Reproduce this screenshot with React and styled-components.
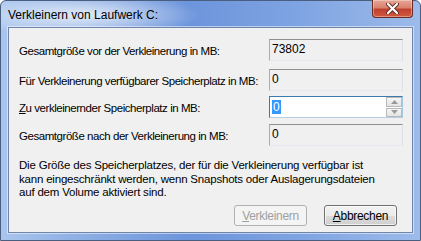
import React from "react";
import styled, { createGlobalStyle } from "styled-components";

const Global = createGlobalStyle`
  html, body { margin: 0; padding: 0; background: #ffffff; }
  body { font-family: "Liberation Sans", Arial, sans-serif; }
`;

const Window = styled.div`
  width: 421px;
  height: 241px;
  box-sizing: border-box;
  display: flex;
  flex-direction: column;
  border: 1px solid #4a5f80;
  border-radius: 6px 6px 0 0;
  padding: 0 7px 7px 7px;
  background:
    radial-gradient(ellipse 120px 22px at 80px 14px, rgba(255,255,255,0.75), rgba(255,255,255,0) 100%),
    linear-gradient(to right, #a9c5ee 0%, #8fb0e4 18%, #6d95dc 45%, #7ea3e2 70%, #9dbbea 100%);
`;

const TitleBar = styled.div`
  height: 26px;
  display: flex;
  align-items: center;
  justify-content: space-between;
  flex-shrink: 0;
`;

const Title = styled.div`
  font-size: 12px;
  color: #000;
  padding-top: 2px;
`;

const CloseButton = styled.div`
  align-self: flex-start;
  margin-top: -1px;
  width: 41px;
  height: 18px;
  box-sizing: border-box;
  border: 1px solid #6b2a24;
  border-top: none;
  border-radius: 0 0 4px 4px;
  background: linear-gradient(to bottom, #e8a593 0%, #d8826f 45%, #c0402e 55%, #d05a3e 100%);
  display: flex;
  align-items: center;
  justify-content: center;
  box-shadow: inset 0 0 0 1px rgba(255,255,255,0.35);
`;

const Client = styled.div`
  flex: 1;
  box-sizing: border-box;
  background: #f0f0f0;
  border: 1px solid #6f86a8;
  box-shadow: 0 0 0 1px rgba(255,255,255,0.5);
  padding: 11px 9px 6px 10px;
  display: flex;
  flex-direction: column;
  font-size: 11.5px;
  color: #000;
`;

const FieldRow = styled.div`
  display: grid;
  grid-template-columns: 250px 134px;
  align-items: center;
  margin-top: ${(p) => p.$top}px;
`;

const Label = styled.div`
  white-space: nowrap;
  letter-spacing: -0.45px;
  padding-top: 2px;
`;

const Field = styled.div`
  height: 22px;
  box-sizing: border-box;
  border: 1px solid #abadb3;
  border-top-color: #8e8f8f;
  border-right-color: #dbdfe6;
  border-bottom-color: #e3e9ef;
  background: #f0f0f0;
  display: flex;
  align-items: flex-start;
  padding: 2px 2px;
  line-height: 14px;
  font-size: 12px;
`;

const SpinField = styled.div`
  height: 22px;
  box-sizing: border-box;
  border: 1px solid #3d7bad;
  border-bottom-color: #b5cfe7;
  border-right-color: #a4c9e3;
  background: #ffffff;
  display: flex;
  align-items: stretch;
  font-size: 12px;
`;

const SpinInput = styled.div`
  flex: 1;
  padding: 3px 2px;
  line-height: 14px;
`;

const Selected = styled.span`
  background: #3399ff;
  color: #fff;
  padding: 0 1px;
`;

const SpinButtons = styled.div`
  width: 16px;
  display: flex;
  flex-direction: column;
  gap: 1px;
`;

const SpinButton = styled.div`
  flex: 1;
  border: 1px solid #b9b9b9;
  background: linear-gradient(to bottom, #f6f6f6, #e4e4e4);
  display: flex;
  align-items: center;
  justify-content: center;
`;

const Note = styled.p`
  margin: 13px 0 0 0;
  line-height: 13.5px;
  white-space: nowrap;
  letter-spacing: -0.2px;
`;

const ButtonBar = styled.div`
  margin-top: auto;
  display: flex;
  justify-content: flex-end;
  gap: 17px;
  padding-right: 6px;
`;

const Button = styled.div`
  width: 73px;
  height: 21px;
  box-sizing: border-box;
  border-radius: 3px;
  display: flex;
  align-items: center;
  justify-content: center;
  font-size: 12px;
  letter-spacing: -0.3px;
  border: 1px solid ${(p) => (p.$disabled ? "#adb2b5" : "#707070")};
  color: ${(p) => (p.$disabled ? "#a0a0a0" : "#000")};
  background: ${(p) =>
    p.$disabled
      ? "#f4f4f4"
      : "linear-gradient(to bottom, #f2f2f2 0%, #ebebeb 50%, #dddddd 51%, #cfcfcf 100%)"};
  box-shadow: ${(p) => (p.$disabled ? "none" : "inset 0 0 0 1px rgba(255,255,255,0.7)")};
`;

const Arrow = ({ up }) => (
  <svg width="7" height="4" viewBox="0 0 7 4">
    <path d={up ? "M0 4 L3.5 0 L7 4 Z" : "M0 0 L3.5 4 L7 0 Z"} fill="#9a9a9a" />
  </svg>
);

const rows = [
  { label: "Gesamtgröße vor der Verkleinerung in MB:", value: "73802", top: 0 },
  { label: "Für Verkleinerung verfügbarer Speicherplatz in MB:", value: "0", top: 8 },
  { label: "spin", top: 5 },
  { label: "Gesamtgröße nach der Verkleinerung in MB:", value: "0", top: 6 },
];

export default function App() {
  return (
    <>
      <Global />
      <Window>
        <TitleBar>
          <Title>Verkleinern von Laufwerk C:</Title>
          <CloseButton>
            <svg width="13" height="11" viewBox="0 0 13 11">
              <path d="M2 1 L11 10 M11 1 L2 10" stroke="#5a2a22" strokeWidth="4" strokeLinecap="round" />
              <path d="M2 1 L11 10 M11 1 L2 10" stroke="#ffffff" strokeWidth="2.2" strokeLinecap="round" />
            </svg>
          </CloseButton>
        </TitleBar>
        <Client>
          {rows.map((r, i) =>
            r.label === "spin" ? (
              <FieldRow key={i} $top={r.top}>
                <Label>
                  <u>Z</u>u verkleinernder Speicherplatz in MB:
                </Label>
                <SpinField>
                  <SpinInput>
                    <Selected>0</Selected>
                  </SpinInput>
                  <SpinButtons>
                    <SpinButton>
                      <Arrow up />
                    </SpinButton>
                    <SpinButton>
                      <Arrow />
                    </SpinButton>
                  </SpinButtons>
                </SpinField>
              </FieldRow>
            ) : (
              <FieldRow key={i} $top={r.top}>
                <Label>{r.label}</Label>
                <Field>{r.value}</Field>
              </FieldRow>
            )
          )}
          <Note>
            Die Größe des Speicherplatzes, der für die Verkleinerung verfügbar ist
            <br />
            kann eingeschränkt werden, wenn Snapshots oder Auslagerungsdateien
            <br />
            auf dem Volume aktiviert sind.
          </Note>
          <ButtonBar>
            <Button $disabled>
              <span>
                <u>V</u>erkleinern
              </span>
            </Button>
            <Button>
              <span>
                <u>A</u>bbrechen
              </span>
            </Button>
          </ButtonBar>
        </Client>
      </Window>
    </>
  );
}
